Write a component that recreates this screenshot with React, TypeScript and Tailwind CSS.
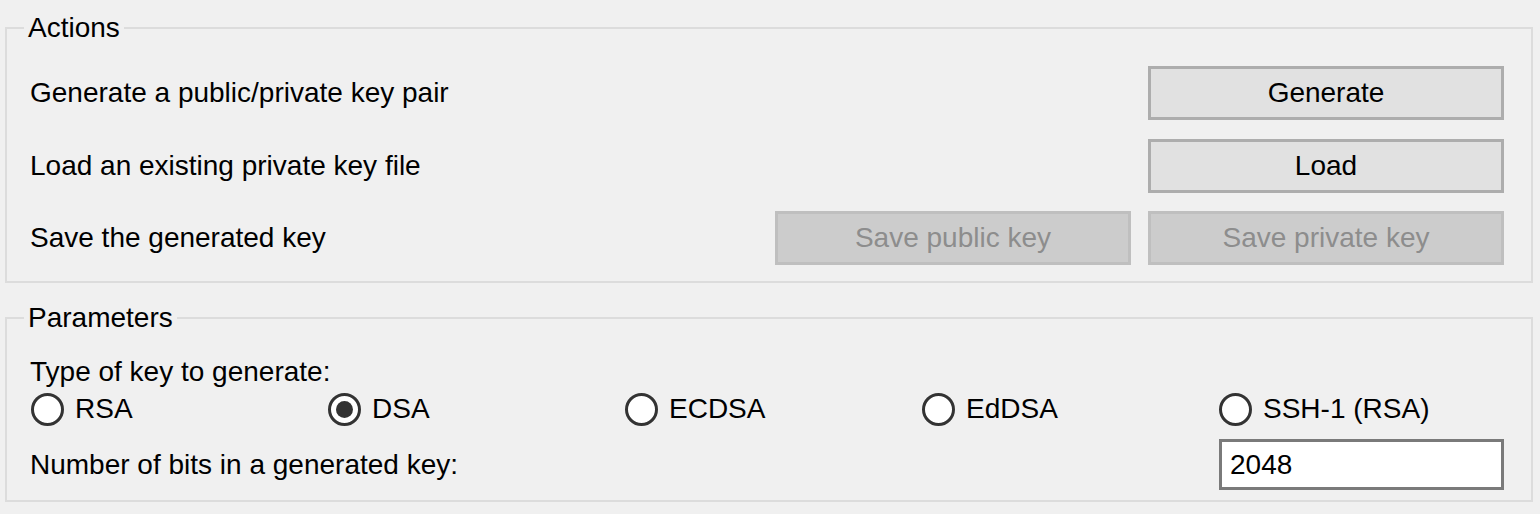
import React from 'react';

const font = { fontFamily: '"Liberation Sans", Arial, sans-serif' };

function Button({ label, disabled = false }: { label: string; disabled?: boolean }) {
  return (
    <button
      type="button"
      disabled={disabled}
      className={
        disabled
          ? 'w-[356px] h-[54px] border-[3px] border-[#bfbfbf] bg-[#cccccc] text-[#8d8d8d] text-[28px] leading-none'
          : 'w-[356px] h-[54px] border-[3px] border-[#adadad] bg-[#e1e1e1] text-black text-[28px] leading-none'
      }
    >
      {label}
    </button>
  );
}

function Radio({ label, checked = false }: { label: string; checked?: boolean }) {
  return (
    <label className="flex items-center gap-[11px] text-[28px] leading-none text-black whitespace-nowrap">
      <span className="w-[33px] h-[33px] shrink-0 rounded-full border-[3px] border-[#333333] bg-white flex items-center justify-center">
        {checked && <span className="w-[17px] h-[17px] rounded-full bg-[#333333]" />}
      </span>
      {label}
    </label>
  );
}

export default function App() {
  return (
    <div className="w-[1540px] h-[514px] bg-[#f0f0f0] pl-[5px] pr-[7px] pt-[14px] text-black" style={font}>
      {/* Actions */}
      <fieldset className="min-w-0 border-2 border-[#dcdcdc] pl-[23px] pr-[27px] pt-[24px] pb-[16px]">
        <legend className="-ml-[6px] px-[4px] text-[28px] leading-[28px]">Actions</legend>
        <div className="flex items-center justify-between">
          <span className="text-[28px]">Generate a public/private key pair</span>
          <Button label="Generate" />
        </div>
        <div className="flex items-center justify-between mt-[19px]">
          <span className="text-[28px]">Load an existing private key file</span>
          <Button label="Load" />
        </div>
        <div className="flex items-center justify-between mt-[18px]">
          <span className="text-[28px]">Save the generated key</span>
          <div className="flex gap-[17px]">
            <Button label="Save public key" disabled />
            <Button label="Save private key" disabled />
          </div>
        </div>
      </fieldset>

      {/* Parameters */}
      <fieldset className="min-w-0 mt-[21px] border-2 border-[#dcdcdc] pl-[23px] pr-[27px] pt-[25px] pb-[10px]">
        <legend className="-ml-[6px] px-[4px] text-[28px] leading-[28px]">Parameters</legend>
        <div className="text-[28px] leading-[30px]">Type of key to generate:</div>
        <div className="grid grid-cols-[297px_297px_297px_297px_1fr] ml-[1px] mt-[5px] h-[34px] items-center">
          <Radio label="RSA" />
          <Radio label="DSA" checked />
          <Radio label="ECDSA" />
          <Radio label="EdDSA" />
          <Radio label="SSH-1 (RSA)" />
        </div>
        <div className="flex items-center justify-between mt-[13px]">
          <span className="text-[28px]">Number of bits in a generated key:</span>
          <input
            readOnly
            value="2048"
            className="w-[285px] h-[51px] border-[3px] border-[#7a7a7a] bg-white px-[8px] text-[28px] outline-none"
          />
        </div>
      </fieldset>
    </div>
  );
}
